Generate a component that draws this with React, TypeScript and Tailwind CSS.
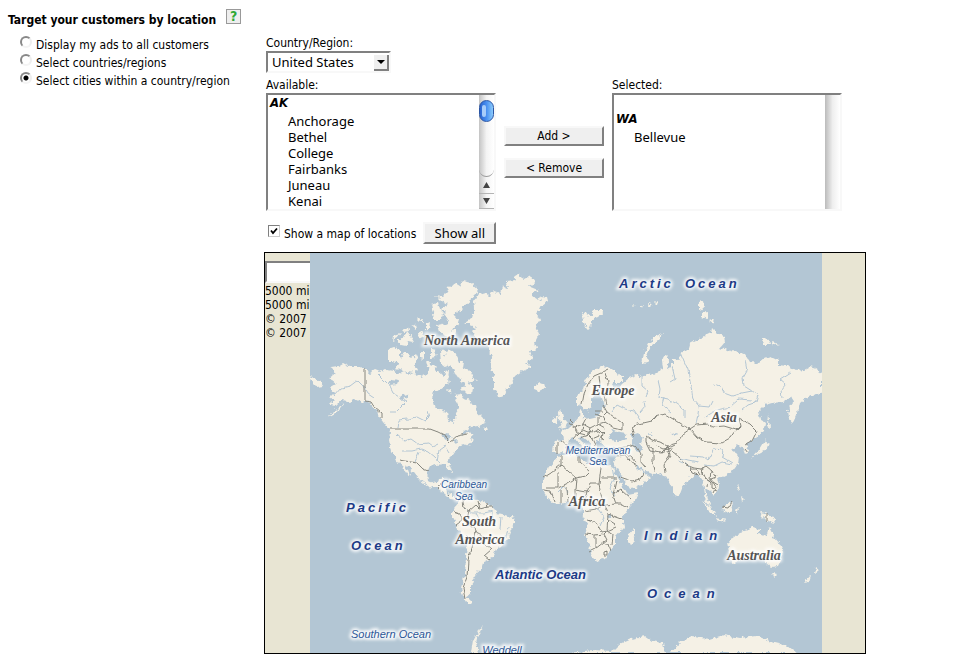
import { ReactNode, useState } from 'react';

const TARGETS = [
  { id: 'all', label: 'Display my ads to all customers' },
  { id: 'countries', label: 'Select countries/regions' },
  { id: 'cities', label: 'Select cities within a country/region' },
];

const AK_CITIES = ['Anchorage', 'Bethel', 'College', 'Fairbanks', 'Juneau', 'Kenai'];

// Coastlines, in the coordinate system of the map's viewBox
const LAND = [
  // North and Central America
  'M329 378 335 374 331 367 338 366 343 363 349 366 357 366 365 369 370 373 375 370 380 372 386 369 393 370 398 374 404 371 409 375 415 373 421 377 428 374 430 365 434 364 437 371 443 376 448 371 449 378 446 384 439 389 434 392 432 399 434 406 440 410 447 412 448 421 453 424 455 419 456 412 459 408 457 402 455 395 461 394 465 400 469 398 471 404 475 406 477 413 482 417 486 422 478 426 471 427 464 431 461 436 468 432 473 434 471 438 474 441 466 446 462 443 457 449 453 455 448 460 450 466 452 472 449 471 446 464 442 464 436 465 430 467 427 473 428 480 433 483 437 482 438 478 443 478 442 484 447 486 448 493 452 497 458 497 457 500 450 499 444 493 437 488 428 486 420 480 413 472 407 465 405 466 411 475 409 476 402 466 396 458 391 451 389 441 390 431 386 426 380 418 376 410 370 403 366 401 362 402 355 399 350 402 343 400 337 405 330 404 334 400 330 397 334 393 330 388 337 384Z',
  // Greenland
  'M464 323 472 318 475 308 474 301 479 294 486 292 488 297 494 291 500 293 502 286 508 289 507 281 514 280 517 275 524 279 530 276 535 283 528 286 538 290 532 295 539 301 542 296 547 297 548 301 541 306 537 314 540 320 536 326 539 334 535 342 537 349 530 352 533 359 526 362 531 367 522 371 516 375 511 385 506 388 503 398 497 396 494 388 494 378 491 367 492 359 489 352 486 343 478 340 472 331 476 327Z',
  // Ellesmere and Devon
  'M436 296 442 297 447 292 449 287 455 283 460 286 463 281 471 283 478 289 475 296 470 298 469 303 463 306 460 311 453 315 459 319 457 326 450 331 446 326 449 320 446 314 441 309 447 305 441 301Z',
  'M431 304 438 302 440 309 444 314 441 320 434 320 433 313Z',
  'M437 325 445 323 449 330 456 331 454 337 444 336 439 332Z',
  // Queen Elizabeth islands
  'M419 320 423 318 424 323ZM426 324 430 322 429 329 426 329ZM416 318 420 317 419 321ZM411 326 415 325 416 329ZM402 330 408 327 409 331 404 332ZM394 335 401 333 397 338 393 340ZM398 341 404 336 407 332 411 337 414 342 409 341 406 346 401 345ZM418 334 423 331 424 337 419 340ZM429 335 436 333 434 340 430 339Z',
  // Victoria island
  'M388 349 394 347 400 350 400 358 404 352 409 352 411 359 416 355 418 359 415 364 418 370 414 373 407 372 400 370 395 369 399 364 393 361 388 361Z',
  // Prince of Wales, Somerset
  'M420 352 424 352 424 359 420 358ZM431 349 436 350 435 358 431 359ZM426 362 430 363 429 369Z',
  // Baffin
  'M440 351 443 349 446 355 449 350 454 351 457 357 459 362 464 362 463 368 470 370 472 376 477 380 472 382 468 381 473 388 472 394 466 393 461 388 465 386 461 379 455 375 453 369 448 364 447 368 441 363Z',
  'M445 371 449 370 448 378 450 382 444 380ZM447 389 451 390 450 393Z',
  // Iceland, Svalbard and Novaya Zemlya
  'M534 386 539 383 544 384 545 388 539 391 534 389Z',
  'M582 314 586 312 589 317 595 310 603 310 600 316 594 318 591 325 588 332 585 325Z',
  'M642 364 644 353 649 343 656 336 663 333 659 339 651 346 647 356 648 363Z',
  'M699 302 703 301 704 309 699 310ZM702 312 708 311 708 319 702 317ZM709 321 715 319 713 324ZM762 339 768 338 770 344 763 344ZM772 342 779 344 773 346Z',
  'M632 305 635 304 634 307ZM640 307 643 305 642 308ZM648 305 652 303 651 307ZM655 302 658 301 657 304Z',
  // British isles, Newfoundland
  'M557 415 561 409 563 417 568 423 566 427 559 428 562 422 558 420ZM552 419 557 416 557 423 552 424ZM483 429 487 427 488 431 484 431Z',
  // Europe and Asia
  'M577 405 577 396 583 390 586 380 591 373 597 369 603 366 610 368 616 374 623 376 623 382 614 382 610 384 616 389 622 384 629 378 637 375 642 378 648 373 653 375 659 371 663 369 662 360 665 355 669 359 667 370 672 367 672 359 678 361 681 353 687 351 689 344 697 340 703 337 711 333 712 328 717 333 724 336 725 342 720 348 728 350 735 352 745 354 750 362 759 363 765 358 770 356 778 360 778 365 787 366 796 371 804 370 810 367 816 369 822 373 822 391 813 396 806 398 800 403 798 411 793 423 789 418 788 410 793 403 791 397 782 402 772 403 765 405 758 412 760 418 765 422 764 431 757 437 749 442 746 445 749 451 745 454 742 447 737 445 731 450 739 455 738 464 732 472 724 476 717 479 720 487 713 496 709 490 706 488 708 499 711 508 706 501 704 488 702 479 696 474 690 478 683 486 680 494 676 497 672 488 668 479 663 475 655 474 646 472 639 466 635 463 638 469 645 473 650 477 643 484 636 488 629 489 624 480 617 469 614 461 617 456 616 449 609 448 603 446 600 440 596 441 598 447 594 449 588 441 582 436 580 440 588 446 591 450 587 451 580 445 574 438 569 439 567 445 563 453 557 454 553 450 555 441 564 440 563 434 559 431 568 428 574 423 579 417 580 409 583 411 583 417 590 419 598 417 601 411 606 405 602 402 600 393 602 386 597 391 592 398 592 405 587 412 583 406Z',
  // Africa
  'M558 456 567 454 577 453 580 459 587 463 594 463 603 466 612 465 616 474 621 483 625 491 628 495 638 493 635 500 628 508 622 517 624 527 616 536 616 544 610 551 604 559 596 561 592 554 589 545 585 535 588 524 583 515 583 508 577 502 568 502 561 504 554 503 547 497 543 491 543 478 549 467Z',
  'M635 529 635 536 631 545 628 541 629 534Z',
  // South America
  'M455 507 459 502 464 498 471 499 478 500 487 503 493 507 497 513 505 515 514 518 516 522 511 529 508 538 502 545 496 549 492 558 485 561 483 567 477 572 475 579 470 586 470 594 466 597 472 603 467 603 463 596 461 588 465 574 466 557 467 540 459 530 453 518 453 512Z',
  // South-east Asia
  'M703 501 709 506 714 512 716 517 710 513ZM716 518 727 520 726 522 717 520ZM722 507 731 502 733 507 729 513 723 511ZM736 510 739 507 738 515ZM738 483 740 490 737 489ZM741 496 745 499 742 502ZM759 513 766 514 773 516 776 523 768 521 763 518Z',
  // Japan
  'M768 414 770 428 767 426ZM765 440 769 443 766 450 758 454 752 458 759 450Z',
  // Australia, Tasmania and New Zealand
  'M728 541 735 536 741 532 748 530 753 527 759 529 759 534 766 537 769 527 774 537 780 544 784 553 778 566 771 567 764 561 757 557 745 559 734 563 729 560 730 552ZM773 573 777 574 774 577ZM815 567 819 570 814 574ZM811 575 809 582 804 583Z',
  // Caribbean
  'M449 480 457 482 460 485 452 482ZM463 487 469 488 464 490Z',
  // Aleutians and the eastern edge of Siberia
  'M310 376 315 378 320 382 323 386 317 387 312 382ZM338 407 344 403 337 412 328 417Z',
  // Antarctica
  'M471 653 473 640 479 630 484 626 478 634 476 643 479 653ZM570 653 592 650 612 651 618 645 632 639 640 637 645 636 652 641 663 643 665 653ZM670 653 680 642 692 637 710 639 724 635 740 638 757 636 775 643 788 646 797 653Z',
];

// Country borders
const BORDERS = [
  'M365 369V401L371 402 375 408 381 413 381 417',
  'M390 429H430L438 432 446 436 450 443 458 436 467 434',
  'M400 460 411 462 417 463 423 469 428 471',
  'M437 488 441 484M447 493 451 497',
  // South America
  'M463 500 464 508 469 511 476 505 480 509 487 507 493 507M454 512 460 514 463 520 456 525M469 511 466 522 475 530 474 539 467 537M474 531 482 535 486 546 492 549 484 556 489 560M474 539 472 548 468 560 467 577 463 588 465 599M474 539 481 540 486 546M478 501 480 509M486 503 487 508',
  // Europe
  'M582 405 584 394 588 384 594 376 601 373 609 369M600 385 599 376M607 394 608 382 605 373M607 405 605 395M569 424 575 427 578 433 573 439M575 427 583 424 586 418M583 424 590 428 598 424 598 417M583 430 590 433 598 429 603 434 607 430M603 405 607 412 602 417 605 422 598 424M607 412 614 417 622 423 622 430 614 428 605 422M587 434 592 439 599 436 604 440M592 439 595 445M578 433 586 435 593 430M598 424 605 428M560 441 567 445M557 443 557 453M580 438 585 436M596 430 600 433M596 411 603 411M595 414 601 417M583 424 582 431 577 436M590 428 588 434M603 434 602 440M570 420 574 424',
  // Russia, Central Asia and China
  'M634 438 632 428 638 424 651 421 655 417 665 414 673 419 682 425 690 429 696 425 708 424 713 427 724 426 737 430 741 426 739 418 750 424 757 431 752 441 745 445M690 429 697 437 706 442 721 443 730 438 735 431M690 429 683 434 677 443 667 446 660 442 652 440 646 436 646 443 653 449M646 443 650 451 661 453 668 446 673 452 680 458 686 465 694 468 701 469M653 449 653 462 655 472M668 446 670 455 664 464 665 473M630 445 637 447 641 454 641 462 646 468M617 448 625 447 632 446M617 456 625 455 630 461 637 466M620 477 632 481 640 479 643 474M701 469 706 466 711 470 716 477M701 469 704 478 708 479 707 487M711 470 710 480 718 485M716 477 711 479 716 487 713 493M690 467 692 473 698 475M624 453 631 457 636 463M657 446 663 449 669 448 675 445M661 453 667 451 673 449M703 467 702 474 705 478M708 479 712 483 712 488 717 490M748 453 745 449M690 470 697 470 700 475',
  // Africa
  'M561 456 561 465 551 473 543 478M561 465 576 478 586 476 590 472 579 462 579 456M558 472V488H546M558 488 568 483 576 478M576 478 575 490 587 492 590 484 599 484 601 467M599 484 602 499 598 503 605 505 616 504 613 495 616 480M601 478H616M587 492 584 500 588 505 598 503M543 490 551 491 555 502M561 490 561 503M567 488 568 502M575 490 575 501M616 504 622 504 628 508M613 495 621 490 631 499M605 505 608 514 622 519M585 511 596 509 605 505M587 520 596 523 601 532 607 531 608 514M585 534 595 535 604 534 607 531 616 527M595 535 595 549 589 552M595 549 604 542 609 545 611 551M604 534 607 540 604 542M607 531 613 535 612 545M607 520 615 525M604 552 607 551 607 555 604 555Z',
  // Islands
  'M722 507 728 508 732 502M767 513V522',
];

const RIVERS = [
  'M334 396 341 388 350 386 358 380 364 386 368 393 374 397',
  'M376 372 382 378 389 385 393 393 399 397 407 401 402 406 396 412 390 412',
  'M398 428 399 420 408 419 417 417 425 421 429 417 427 411',
  'M396 434 404 441 411 439 418 444 428 443 433 447 439 444M402 451 412 451 421 449 428 452 434 457 440 464M437 462 439 450 446 445M415 462 419 452M444 445 449 453',
  'M464 508 472 513 484 513 493 511M476 514 482 525M492 512 495 526M501 516 500 529M508 527 506 538',
  'M681 354 688 370 691 387 693 399 699 406 698 414 696 424M699 406 709 407 712 401',
  'M658 380 660 389 659 397 668 399 677 404 685 410 685 418M664 397 662 405 671 412',
  'M745 360 747 371 743 378 744 386 752 391 759 395 757 402 748 405 742 410M752 391 742 393 732 396 724 393 721 386 714 384',
  'M782 397 781 390 786 384 780 379 791 372M705 417 717 410 730 407 739 399 751 400',
  'M612 412 617 405 625 409 634 411 640 420M644 401 645 407 640 413',
  'M612 466 614 479 610 488 615 497M595 505 604 517 600 526M558 492 564 486 568 492',
  'M690 456 704 457 708 460 714 449 723 450 722 457 732 463M681 458 688 460 698 462M678 461 686 464 692 470M704 465 714 466 722 462 732 464',
  'M642 376 642 386 648 391 646 396M672 366 675 379 670 382',
];

// Inland water
const LAKES = [
  'M631 434 637 432 643 438 640 444 643 451 637 453 633 445Z',
  'M609 435 613 430 619 433 625 434 628 439 618 441 610 440Z',
  'M388 382 392 379 399 380 397 385 391 386ZM401 396 409 393 406 398 400 400Z',
  'M441 436 447 433 452 437 448 440ZM452 440 458 439 455 443Z',
  'M670 434 678 433 675 436ZM650 433 653 435 650 438ZM607 514 611 514 610 518 607 518Z',
];

function Glow({ children }: { children: ReactNode }) {
  return (
    <>
      <g filter="url(#halo)" fill="#fff" stroke="#fff" strokeWidth="4" opacity="0.85" aria-hidden="true">
        {children}
      </g>
      <g>{children}</g>
    </>
  );
}

function MapLabels() {
  return (
    <>
      <g className="font-['Liberation_Serif',serif] text-[14px] font-bold italic" fill="#555" textAnchor="middle">
        <Glow>
          <text x="467" y="345">North America</text>
          <text x="613" y="395">Europe</text>
          <text x="724" y="422">Asia</text>
          <text x="587" y="506">Africa</text>
          <text x="479" y="526">South</text>
          <text x="480" y="544">America</text>
          <text x="754" y="560">Australia</text>
        </Glow>
      </g>
      <g className="font-['Liberation_Sans',sans-serif] text-[13px] font-bold italic" fill="#1c3a86">
        <Glow>
          <g className="tracking-[3px]">
            <text x="619" y="288">Arctic</text>
            <text x="685" y="288">Ocean</text>
            <text x="346" y="512">Pacific</text>
            <text x="351" y="550">Ocean</text>
          </g>
          <g className="tracking-[7px]">
            <text x="644" y="540">Indian</text>
            <text x="647" y="598">Ocean</text>
          </g>
          <text x="495" y="579">Atlantic Ocean</text>
        </Glow>
      </g>
      <g className="font-['Liberation_Sans',sans-serif] text-[10px] italic" fill="#2c5797" textAnchor="middle">
        <Glow>
          <text x="598" y="454">Mediterranean</text>
          <text x="598" y="465">Sea</text>
          <text x="464" y="488">Caribbean</text>
          <text x="464" y="500">Sea</text>
          <g className="text-[11px]">
            <text x="391" y="638">Southern Ocean</text>
            <text x="502" y="654">Weddell</text>
          </g>
        </Glow>
      </g>
    </>
  );
}

function WorldMap() {
  return (
    <svg
      viewBox="310 253 512 400"
      className="h-[400px] w-[512px] shrink-0 bg-[#b3c6d4]"
      role="img"
      aria-label="World map"
    >
      <defs>
        <filter id="halo" x="-20%" y="-20%" width="140%" height="140%">
          <feGaussianBlur stdDeviation="1.5" />
        </filter>
        {/* roughens the coastlines */}
        <filter id="coast" filterUnits="userSpaceOnUse" x="310" y="253" width="512" height="400">
          <feTurbulence type="fractalNoise" baseFrequency="0.22" numOctaves="3" seed="4" result="noise" />
          <feDisplacementMap in="SourceGraphic" in2="noise" scale="6" xChannelSelector="R" yChannelSelector="G" />
        </filter>
        <filter id="line" filterUnits="userSpaceOnUse" x="310" y="253" width="512" height="400">
          <feTurbulence type="fractalNoise" baseFrequency="0.15" numOctaves="2" seed="9" result="noise" />
          <feDisplacementMap in="SourceGraphic" in2="noise" scale="4" xChannelSelector="R" yChannelSelector="G" />
        </filter>
      </defs>
      <g filter="url(#coast)">
        <path d={LAND.join('')} fill="#f5f1e6" />
        <path d={LAKES.join('')} fill="#b3c6d4" />
      </g>
      <g filter="url(#line)" fill="none" strokeLinejoin="round">
        <path d={RIVERS.join('')} stroke="#b3c6d4" />
        <path d={BORDERS.join('')} stroke="#86867e" />
      </g>
      <MapLabels />
    </svg>
  );
}

function ScrollBar() {
  return (
    <div
      aria-hidden="true"
      className="flex w-[15px] shrink-0 flex-col bg-linear-to-r from-[#c4c4c4] via-[#f4f4f4] to-white"
    >
      <div className="flex-1 rounded-b-full border-b border-[#999] pt-[5px]">
        <div className="h-[22px] rounded-full border border-[#2a55a5] bg-linear-to-r from-[#2a63cf] via-[#4a90f0] to-[#8ccbfb] p-1 pl-[2px]">
          <div className="h-3 w-1 rounded-sm bg-[#a8cdfa]" />
        </div>
      </div>
      <svg viewBox="0 0 15 32" className="h-8 w-full">
        <path d="M0 16.5h15M0 31.5h15" stroke="#b4b4b4" />
        <path d="M4 11h7L7.500 5ZM4 21h7L7.500 27Z" fill="#444" />
      </svg>
    </div>
  );
}

const fieldLabel = 'block pt-[2px] leading-[15px]';
const listFrame = 'flex h-[118px] w-[230px] border-2 border-t-[#808080] border-l-[#808080] border-r-[#f8f8f8] border-b-[#f8f8f8]';
const list =
  "min-w-0 flex-1 appearance-none overflow-hidden bg-white font-['Noto_Sans',sans-serif] text-[13px] leading-4 outline-none [scrollbar-width:none]";
const group =
  "m-0 p-0 font-['DejaVu_Sans_Condensed','DejaVu_Sans',sans-serif] text-[13px] leading-4 font-bold italic";
const option =
  "block h-4 min-h-0 p-0 pl-5! font-['Noto_Sans',sans-serif] leading-4 font-normal not-italic";
const button =
  'border-2 border-t-[#f8f8f8] border-l-[#f8f8f8] border-r-[#808080] border-b-[#808080] bg-[#efefef]';

export default function App() {
  const [target, setTarget] = useState('cities');
  const [showMap, setShowMap] = useState(true);

  return (
    <main className="bg-white px-2 pt-[11px] pb-2 font-['DejaVu_Sans_Condensed','DejaVu_Sans',sans-serif] text-[12px] leading-[18px] text-black [font-stretch:condensed]">
      <h1 className="flex h-[18px] items-center gap-[10px] font-bold">
        Target your customers by location
        <button
          type="button"
          aria-label="Help"
          className="mb-2 flex size-[15px] items-center justify-center border border-[#999] bg-[#eee] text-[14px] leading-none font-bold text-[#2fa836]"
        >
          ?
        </button>
      </h1>
      <div className="flex">
        <fieldset className="w-[256px] shrink-0 pt-[7px] pl-3">
          {TARGETS.map((t) => (
            <label key={t.id} className="flex h-[18px] gap-1">
              <input
                type="radio"
                name="target"
                checked={target === t.id}
                onChange={() => setTarget(t.id)}
                className="size-3 shrink-0 appearance-none rounded-full border-2 border-t-[#888] border-r-[#eee] border-b-[#f4f4f4] border-l-[#888] checked:bg-[radial-gradient(circle,#000_2px,#fff_3px)]"
              />
              {t.label}
            </label>
          ))}
        </fieldset>

        <section className="min-w-0 flex-1">
          <div className="pt-[5px] pl-[2px]">
            <label htmlFor="country" className={fieldLabel}>
              Country/Region:
            </label>
            <div className="relative w-[125px]">
              <select
                id="country"
                className="block h-[22px] w-full appearance-none border-2 border-t-[#808080] border-r-[#f8f8f8] border-b-[#f8f8f8] border-l-[#808080] bg-white pl-1 font-['Noto_Sans',sans-serif] text-[13px] leading-4"
              >
                <option>United States</option>
              </select>
              <span className="pointer-events-none absolute top-1 right-[2px] flex h-4 w-[15px] items-center justify-center border-r-2 border-b-2 border-[#808080] bg-[#efefef]">
                <svg viewBox="0 0 8 4" className="h-1 w-2">
                  <path d="M0 0h8L4 4Z" />
                </svg>
              </span>
            </div>

            <div className="mt-[3px] flex">
              <div>
                <label htmlFor="available" className={fieldLabel}>
                  Available:
                </label>
                <div className={listFrame}>
                  <select id="available" size={7} className={list}>
                    <optgroup label="AK" className={group}>
                      {AK_CITIES.map((city) => (
                        <option key={city} className={option}>
                          {city}
                        </option>
                      ))}
                    </optgroup>
                  </select>
                  <ScrollBar />
                </div>
              </div>
              <div className="flex flex-col gap-3 px-2 pt-[50px]">
                <button type="button" className={`${button} h-5 w-[100px] pt-px leading-[15px]`}>
                  Add &gt;
                </button>
                <button type="button" className={`${button} h-5 w-[100px] pt-px leading-[15px]`}>
                  &lt; Remove
                </button>
              </div>
              <div>
                <label htmlFor="selected" className={fieldLabel}>
                  Selected:
                </label>
                <div className={listFrame}>
                  <select id="selected" size={7} className={list}>
                    <option className={option} aria-label="None" />
                    <optgroup label="WA" className={group}>
                      <option className={option}>Bellevue</option>
                    </optgroup>
                  </select>
                  <div className="w-[15px] bg-linear-to-r from-[#bbb] via-[#eee] to-white" />
                </div>
              </div>
            </div>

            <div className="mt-[11px] flex h-[22px] items-center">
              <label className="flex items-center gap-1 pl-[2px]">
                <span className="relative mb-1 size-3">
                  <input
                    type="checkbox"
                    checked={showMap}
                    onChange={(e) => setShowMap(e.target.checked)}
                    className="peer block size-3 appearance-none border border-t-[#808080] border-r-[#ccc] border-b-[#ccc] border-l-[#808080] bg-white"
                  />
                  <svg
                    viewBox="0 0 12 12"
                    className="pointer-events-none absolute inset-0 hidden size-3 peer-checked:block"
                  >
                    <path d="M3 5.500 5 8 9 3.500" fill="none" stroke="#000" strokeWidth="1.800" />
                  </svg>
                </span>
                <span className="pt-px">Show a map of locations</span>
              </label>
              <button
                type="button"
                className={`${button} ml-[7px] h-[22px] w-[73px] font-['Noto_Sans',sans-serif] text-[13px]`}
              >
                Show all
              </button>
            </div>
          </div>

          {showMap && (
            <div className="mt-2 flex h-[402px] max-w-[602px] overflow-hidden border border-black bg-[#e8e5d3]">
              <div className="w-[45px] shrink-0 overflow-hidden pt-2 leading-[14px] whitespace-nowrap">
                <input
                  type="text"
                  aria-label="Location"
                  className="mb-px block h-[22px] w-[100px] border-2 border-t-[#808080] border-r-[#f8f8f8] border-b-[#f8f8f8] border-l-[#808080] bg-white"
                />
                <p>5000 mi</p>
                <p>5000 mi</p>
                <p>© 2007</p>
                <p>© 2007</p>
              </div>
              <WorldMap />
            </div>
          )}
        </section>
      </div>
    </main>
  );
}
